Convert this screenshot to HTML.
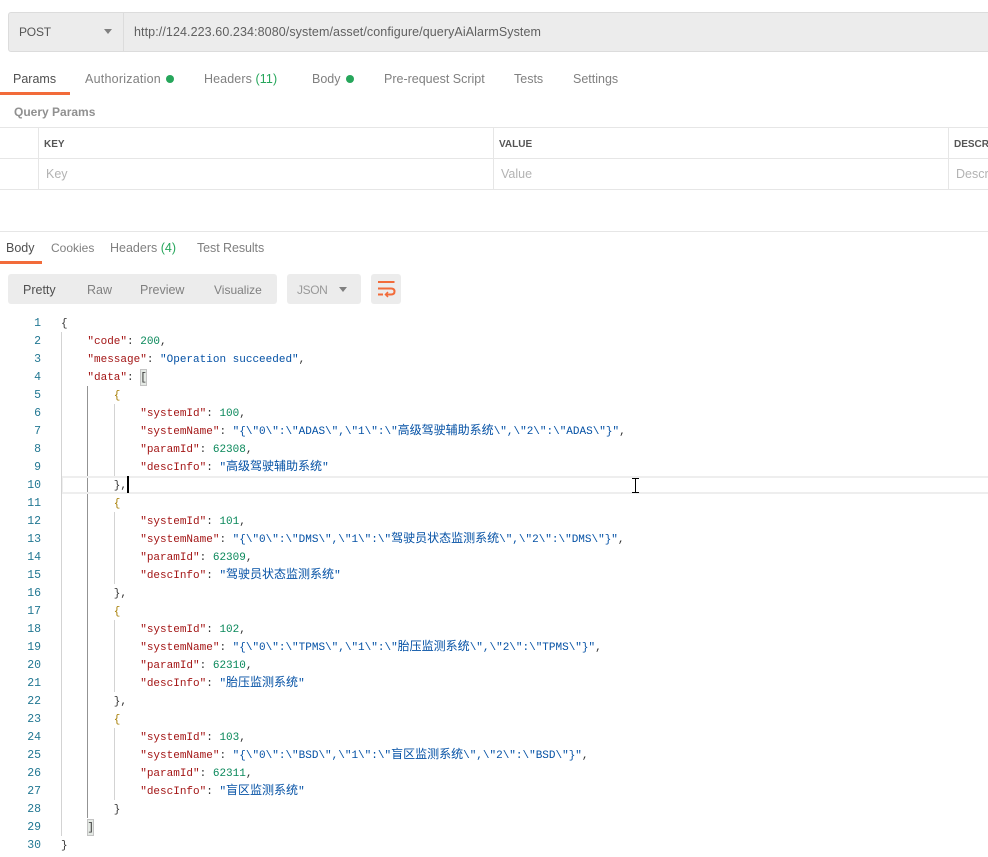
<!DOCTYPE html>
<html><head><meta charset="utf-8">
<style>
html,body{margin:0;padding:0;background:#fff;width:988px;height:857px;overflow:hidden}
body{position:relative;font-family:"Liberation Sans","Noto Sans CJK SC",sans-serif;font-size:12.5px;color:#808080}
.a{position:absolute;white-space:nowrap}
.t{position:absolute;white-space:nowrap;line-height:16px;height:16px}
.hl{position:absolute;background:#ededed}
.l{position:absolute;background:#e6e6e6}
.dot{position:absolute;width:8px;height:8px;border-radius:50%;background:#26a65b}
.code{position:absolute;left:0;top:315px;font-family:"Liberation Mono","Noto Sans CJK SC",monospace;font-size:11px;line-height:18px}
.r{position:absolute;left:61px;height:18px;white-space:pre;color:#333;letter-spacing:0}
.n{position:absolute;width:41px;left:0;text-align:right;color:#237893;height:18px;font-size:11.5px}
.k{color:#a31515}.s{color:#0451a5}.d{color:#09885a}.b{color:#0431fa}.y{color:#a57c00}
.s i{font-style:normal;font-size:12px;font-family:"Noto Sans CJK SC",sans-serif;line-height:0}
.g{position:absolute;width:1px}
</style></head><body>

<!-- URL bar -->
<div class="a" style="left:8px;top:12px;width:990px;height:38px;background:#ececec;border:1px solid #dcdcdc;border-radius:3px"></div>
<div class="a" style="left:123px;top:13px;width:1px;height:38px;background:#dcdcdc"></div>
<div class="t" style="left:19px;top:24px;color:#555;font-size:12px;letter-spacing:-.2px">POST</div>
<svg class="a" style="left:104px;top:29px" width="9" height="6"><path d="M0 0H8L4 5Z" fill="#808080"/></svg>
<div class="t" style="left:134px;top:24px;color:#606060;letter-spacing:.09px">http://124.223.60.234:8080/system/asset/configure/queryAiAlarmSystem</div>

<!-- Request tabs -->
<div class="t" style="left:13px;top:71px;color:#505050">Params</div>
<div class="a" style="left:0;top:92px;width:70px;height:3px;background:#f26b3a"></div>
<div class="t" style="left:85px;top:71px;letter-spacing:.23px">Authorization</div>
<div class="dot" style="left:166px;top:75px"></div>
<div class="t" style="left:204px;top:71px;letter-spacing:.1px">Headers <span style="color:#26a65b">(11)</span></div>
<div class="t" style="left:312px;top:71px">Body</div>
<div class="dot" style="left:346px;top:75px"></div>
<div class="t" style="left:384px;top:71px">Pre-request Script</div>
<div class="t" style="left:514px;top:71px">Tests</div>
<div class="t" style="left:573px;top:71px">Settings</div>
<div class="t" style="left:14px;top:104px;font-weight:bold;font-size:12px;color:#909090">Query Params</div>

<!-- Params table -->
<div class="l" style="left:0;top:127px;width:988px;height:1px"></div>
<div class="l" style="left:0;top:158px;width:988px;height:1px"></div>
<div class="l" style="left:0;top:189px;width:988px;height:1px"></div>
<div class="l" style="left:38px;top:127px;width:1px;height:63px"></div>
<div class="l" style="left:493px;top:127px;width:1px;height:63px"></div>
<div class="l" style="left:948px;top:127px;width:1px;height:63px"></div>
<div class="t" style="left:44px;top:137px;font-size:10px;font-weight:bold;color:#555">KEY</div>
<div class="t" style="left:499px;top:137px;font-size:10px;font-weight:bold;color:#555">VALUE</div>
<div class="t" style="left:954px;top:137px;font-size:10px;font-weight:bold;color:#555">DESCRIPTION</div>
<div class="t" style="left:46px;top:166px;color:#b3b3b3">Key</div>
<div class="t" style="left:501px;top:166px;color:#b3b3b3">Value</div>
<div class="t" style="left:956px;top:166px;color:#b3b3b3">Description</div>
<div class="l" style="left:0;top:231px;width:988px;height:1px"></div>

<!-- Response tabs -->
<div class="t" style="left:6px;top:240px;color:#505050">Body</div>
<div class="a" style="left:0;top:261px;width:42px;height:3px;background:#f26b3a"></div>
<div class="t" style="left:51px;top:240px;font-size:12px">Cookies</div>
<div class="t" style="left:110px;top:240px">Headers <span style="color:#26a65b">(4)</span></div>
<div class="t" style="left:197px;top:240px;letter-spacing:-.08px">Test Results</div>

<!-- Toolbar -->
<div class="a" style="left:8px;top:274px;width:269px;height:30px;background:#ececec;border-radius:3px"></div>
<div class="t" style="left:23px;top:282px;color:#505050">Pretty</div>
<div class="t" style="left:87px;top:282px">Raw</div>
<div class="t" style="left:140px;top:282px">Preview</div>
<div class="t" style="left:214px;top:282px;font-size:12px">Visualize</div>
<div class="a" style="left:287px;top:274px;width:74px;height:30px;background:#ececec;border-radius:3px"></div>
<div class="t" style="left:297px;top:282px;color:#999;font-size:12px;letter-spacing:-.4px">JSON</div>
<svg class="a" style="left:339px;top:287px" width="9" height="6"><path d="M0 0H8L4 5Z" fill="#808080"/></svg>
<div class="a" style="left:371px;top:274px;width:30px;height:30px;background:#ececec;border-radius:3px"></div>
<svg class="a" style="left:378px;top:281px" width="18" height="18" fill="none" stroke="#f26b3a" stroke-width="2"><path d="M0 1H16.5M0 7.5H13Q16.5 7.5 16.5 10.5T13 13.5H8M0 13.5H5"/><path d="M10 11L7.5 13.5L10 16" stroke-width="1.5"/></svg>

<!-- Code guides and highlights -->
<div class="g" style="left:61px;top:332px;height:504px;background:#d3d3d3"></div>
<div class="g" style="left:87px;top:386px;height:432px;background:#939393"></div>
<div class="g" style="left:114px;top:404px;height:72px;background:#d3d3d3"></div>
<div class="g" style="left:114px;top:512px;height:72px;background:#d3d3d3"></div>
<div class="g" style="left:114px;top:620px;height:72px;background:#d3d3d3"></div>
<div class="g" style="left:114px;top:728px;height:72px;background:#d3d3d3"></div>
<div class="a" style="left:62px;top:476px;width:926px;height:2px;background:#eeeeee"></div>
<div class="a" style="left:62px;top:492px;width:926px;height:2px;background:#eeeeee"></div>
<div class="a" style="left:62px;top:476px;width:1px;height:18px;background:#eeeeee"></div>
<div class="a" style="left:140px;top:369px;width:5px;height:15px;background:#e4e9e4;border:1px solid #c4c4c4"></div>
<div class="a" style="left:87px;top:819px;width:5px;height:15px;background:#e4e9e4;border:1px solid #c4c4c4"></div>
<div class="a" style="left:127px;top:476px;width:2px;height:17px;background:#000"></div>

<!-- Code -->
<div class="code">
<div class="n" style="top:0">1</div><div class="r b" style="top:0;color:#333">{</div>
<div class="n" style="top:18px">2</div><div class="r" style="top:18px">    <span class="k">"code"</span>: <span class="d">200</span>,</div>
<div class="n" style="top:36px">3</div><div class="r" style="top:36px">    <span class="k">"message"</span>: <span class="s">"Operation succeeded"</span>,</div>
<div class="n" style="top:54px">4</div><div class="r" style="top:54px">    <span class="k">"data"</span>: [</div>
<div class="n" style="top:72px">5</div><div class="r y" style="top:72px">        {</div>
<div class="n" style="top:90px">6</div><div class="r" style="top:90px">            <span class="k">"systemId"</span>: <span class="d">100</span>,</div>
<div class="n" style="top:108px">7</div><div class="r" style="top:108px">            <span class="k">"systemName"</span>: <span class="s">"{\"0\":\"ADAS\",\"1\":\"<i>高级驾驶辅助系统</i>\",\"2\":\"ADAS\"}"</span>,</div>
<div class="n" style="top:126px">8</div><div class="r" style="top:126px">            <span class="k">"paramId"</span>: <span class="d">62308</span>,</div>
<div class="n" style="top:144px">9</div><div class="r" style="top:144px">            <span class="k">"descInfo"</span>: <span class="s">"<i>高级驾驶辅助系统</i>"</span></div>
<div class="n" style="top:162px">10</div><div class="r" style="top:162px">        },</div>
<div class="n" style="top:180px">11</div><div class="r y" style="top:180px">        {</div>
<div class="n" style="top:198px">12</div><div class="r" style="top:198px">            <span class="k">"systemId"</span>: <span class="d">101</span>,</div>
<div class="n" style="top:216px">13</div><div class="r" style="top:216px">            <span class="k">"systemName"</span>: <span class="s">"{\"0\":\"DMS\",\"1\":\"<i>驾驶员状态监测系统</i>\",\"2\":\"DMS\"}"</span>,</div>
<div class="n" style="top:234px">14</div><div class="r" style="top:234px">            <span class="k">"paramId"</span>: <span class="d">62309</span>,</div>
<div class="n" style="top:252px">15</div><div class="r" style="top:252px">            <span class="k">"descInfo"</span>: <span class="s">"<i>驾驶员状态监测系统</i>"</span></div>
<div class="n" style="top:270px">16</div><div class="r" style="top:270px">        },</div>
<div class="n" style="top:288px">17</div><div class="r y" style="top:288px">        {</div>
<div class="n" style="top:306px">18</div><div class="r" style="top:306px">            <span class="k">"systemId"</span>: <span class="d">102</span>,</div>
<div class="n" style="top:324px">19</div><div class="r" style="top:324px">            <span class="k">"systemName"</span>: <span class="s">"{\"0\":\"TPMS\",\"1\":\"<i>胎压监测系统</i>\",\"2\":\"TPMS\"}"</span>,</div>
<div class="n" style="top:342px">20</div><div class="r" style="top:342px">            <span class="k">"paramId"</span>: <span class="d">62310</span>,</div>
<div class="n" style="top:360px">21</div><div class="r" style="top:360px">            <span class="k">"descInfo"</span>: <span class="s">"<i>胎压监测系统</i>"</span></div>
<div class="n" style="top:378px">22</div><div class="r" style="top:378px">        },</div>
<div class="n" style="top:396px">23</div><div class="r y" style="top:396px">        {</div>
<div class="n" style="top:414px">24</div><div class="r" style="top:414px">            <span class="k">"systemId"</span>: <span class="d">103</span>,</div>
<div class="n" style="top:432px">25</div><div class="r" style="top:432px">            <span class="k">"systemName"</span>: <span class="s">"{\"0\":\"BSD\",\"1\":\"<i>盲区监测系统</i>\",\"2\":\"BSD\"}"</span>,</div>
<div class="n" style="top:450px">26</div><div class="r" style="top:450px">            <span class="k">"paramId"</span>: <span class="d">62311</span>,</div>
<div class="n" style="top:468px">27</div><div class="r" style="top:468px">            <span class="k">"descInfo"</span>: <span class="s">"<i>盲区监测系统</i>"</span></div>
<div class="n" style="top:486px">28</div><div class="r" style="top:486px">        }</div>
<div class="n" style="top:504px">29</div><div class="r" style="top:504px">    ]</div>
<div class="n" style="top:522px">30</div><div class="r" style="top:522px">}</div>
</div>

<!-- I-beam cursor -->
<svg class="a" style="left:632px;top:478px" width="8" height="16" fill="none" stroke="#000" stroke-width="1"><path d="M0 .5H7M0 14.5H7M3.5 .5V14.5"/></svg>
</body></html>
